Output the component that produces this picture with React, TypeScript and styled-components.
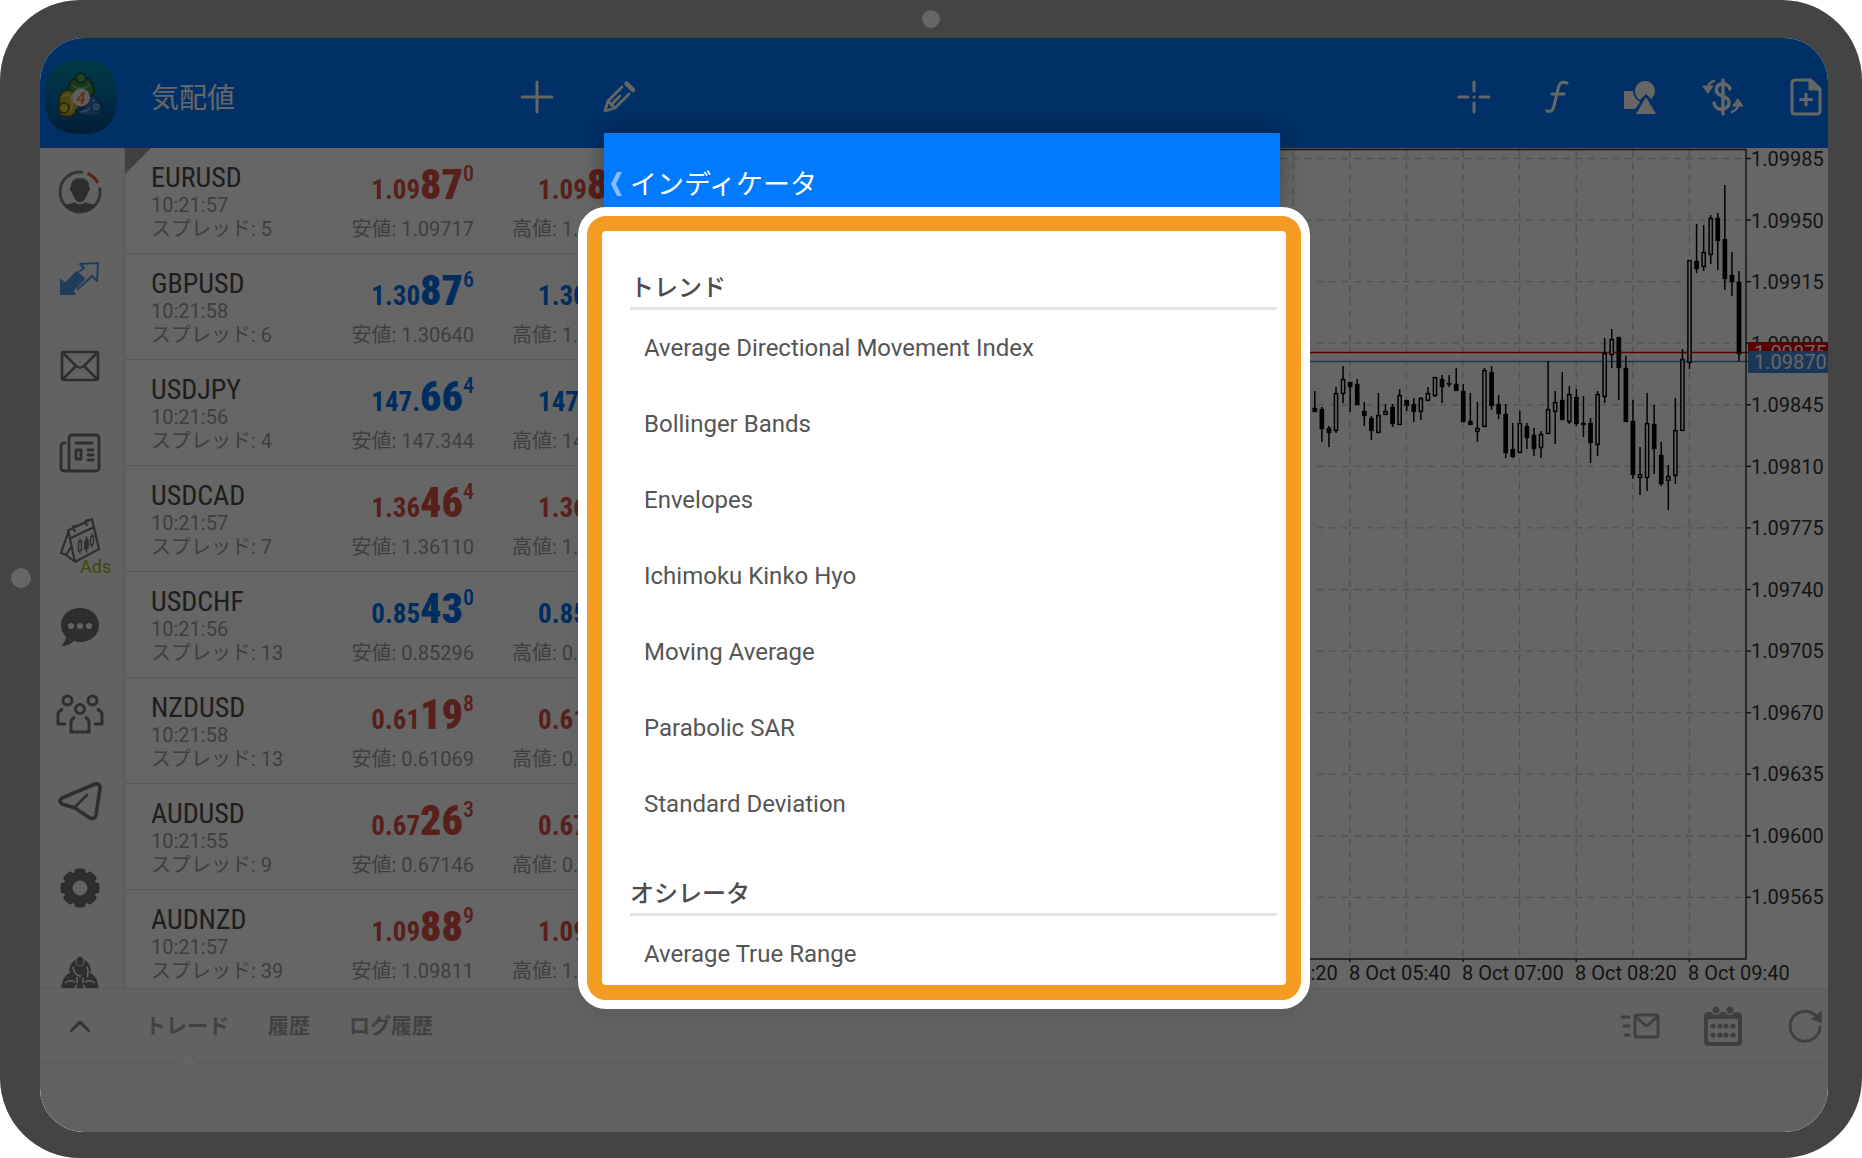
import React from "react";
import styled, { createGlobalStyle } from "styled-components";

const SANS = `Roboto, "Noto Sans CJK JP", sans-serif`;
const NARROW = `"Roboto Condensed", "Liberation Sans Narrow", Roboto, sans-serif`;

const GlobalStyle = createGlobalStyle`
  *, *::before, *::after { box-sizing: border-box; }
  body { margin: 0; background: #fff; font-family: ${SANS}; }
  button { border: 0; padding: 0; background: none; font: inherit; color: inherit; cursor: pointer; }
  svg { display: block; flex: none; }
  h1, h2, p, ul { margin: 0; padding: 0; }
`;

/* ---------- device ---------- */

const Tablet = styled.div`
  position: relative;
  height: 100vh;
  padding: 38px 34px 26px 40px;
  border-radius: 80px;
  background: #444;
`;

const Camera = styled.span<{ $side?: boolean }>`
  position: absolute;
  width: ${(p) => (p.$side ? 20 : 18)}px;
  height: ${(p) => (p.$side ? 20 : 18)}px;
  border-radius: 50%;
  background: #666;
  top: ${(p) => (p.$side ? "calc(50% - 11px)" : "10px")};
  left: ${(p) => (p.$side ? "11px" : "calc(50% - 9px)")};
`;

const Screen = styled.div`
  position: relative;
  display: flex;
  flex-direction: column;
  height: 100%;
  border-radius: 44px;
  overflow: hidden;
  background: #fff;
`;

/* ---------- top bar ---------- */

const TopBar = styled.header`
  display: flex;
  align-items: center;
  flex: none;
  height: 110px;
  padding-top: 8px;
  background: #0079ff;
  color: #fff;
`;

const AppLogo = styled.div`
  padding-left: 4px;
  width: 111px;
`;

const PageTitle = styled.h1`
  width: 344px;
  padding-top: 4px;
  font-size: 28px;
  line-height: 36px;
  font-weight: 400;
`;

const ToolButton = styled.button`
  display: flex;
  align-items: center;
  justify-content: center;
  width: 83px;
  height: 60px;
`;

const Tools = styled.div<{ $end?: boolean }>`
  display: flex;
  margin-left: ${(p) => (p.$end ? "auto" : "0")};
  margin-right: ${(p) => (p.$end ? "-19px" : "0")};
`;

/* ---------- main area ---------- */

const Main = styled.main`
  display: flex;
  flex: 1;
  min-height: 0;
  overflow: hidden;
`;

const SideNav = styled.nav`
  flex: none;
  width: 85px;
  overflow: hidden;
  background: #f5f5f5;
  border-right: 1px solid #dcdcdc;
  color: #747474;
`;

const SideButton = styled.button`
  position: relative;
  display: flex;
  align-items: center;
  justify-content: center;
  width: 80px;
  height: 87px;
`;

const AdsTag = styled.span`
  position: absolute;
  left: 40px;
  bottom: 6px;
  font-size: 18px;
  line-height: 20px;
  color: #98b800;
`;

const Quotes = styled.ul`
  flex: none;
  width: 540px;
  overflow: hidden;
  list-style: none;
  background: #fff;
`;

const QuoteRow = styled.li<{ $marked?: boolean }>`
  display: grid;
  grid-template-columns: 172px 151px auto;
  height: 106px;
  padding: 15px 0 0 26px;
  border-bottom: 1px solid #dcdcdc;
  background: ${(p) =>
    p.$marked
      ? "linear-gradient(135deg, #a4a4a4 18px, transparent 19px) no-repeat #fff"
      : "#fff"};
`;

const Symbol = styled.p`
  font-family: ${NARROW};
  font-size: 28px;
  line-height: 30px;
  color: #4d4d4d;
`;

const Meta = styled.p`
  font-size: 20px;
  line-height: 24px;
  color: #9c9c9c;
  white-space: nowrap;
`;

const QuoteInfo = styled.div`
  white-space: nowrap;
`;

const PriceCell = styled.div<{ $ask?: boolean }>`
  display: flex;
  flex-direction: column;
  align-items: ${(p) => (p.$ask ? "flex-start" : "flex-end")};
  padding-left: ${(p) => (p.$ask ? "38px" : "0")};
`;

const Price = styled.p<{ $up: boolean; $ask?: boolean }>`
  display: flex;
  align-items: baseline;
  height: 54px;
  padding-left: ${(p) => (p.$ask ? "26px" : "0")};
  font-family: ${NARROW};
  font-weight: 700;
  font-size: 27px;
  line-height: 44px;
  color: ${(p) => (p.$up ? "#0072ef" : "#dc5144")};

  /* keeps the baseline of rows without large digits */
  &::before {
    content: "\\200b";
    font-size: 42px;
  }
`;

const Pips = styled.b`
  font-size: 42px;
`;

const Point = styled.sup`
  align-self: flex-start;
  font-size: 22px;
  line-height: 22px;
  font-weight: 500;
`;

/* ---------- chart ---------- */

const ChartPane = styled.section`
  display: flex;
  flex: 1;
  min-width: 0;
  background: #fff;
`;

const PlotColumn = styled.div`
  display: flex;
  flex-direction: column;
  flex: 1;
  min-width: 0;
`;

const Plot = styled.div`
  display: flex;
  justify-content: flex-end;
  height: 815px;
  overflow: hidden;
`;

const TimeScale = styled.div`
  display: flex;
  justify-content: flex-end;
  margin-right: -50px;
  font-size: 20px;
  line-height: 20px;
  color: #333;
`;

const TimeLabel = styled.span`
  width: 113px;
  white-space: nowrap;
`;

const PriceScale = styled.div`
  position: relative;
  display: flex;
  flex-direction: column;
  justify-content: space-between;
  flex: none;
  width: 77px;
  padding: 1px 0 81px 0;
  font-size: 20px;
  line-height: 20px;
  color: #333;
`;

const PriceTag = styled.span<{ $bid?: boolean }>`
  position: absolute;
  left: -3px;
  right: 0;
  top: ${(p) => (p.$bid ? 203 : 194)}px;
  padding-left: 6px;
  line-height: 22px;
  overflow: hidden;
  color: #fff;
  background: ${(p) => (p.$bid ? "#4489dc" : "#e00000")};
`;

/* ---------- bottom toolbox ---------- */

const BottomBar = styled.footer`
  display: flex;
  align-items: center;
  flex: none;
  height: 75px;
  border-top: 1px solid #e2e2e2;
  border-bottom: 1px solid #e2e2e2;
  background: #f6f6f6;
  color: #9e9e9e;
`;

const ExpandButton = styled.button`
  display: flex;
  justify-content: center;
  width: 80px;
  color: #808080;
`;

const TabButton = styled.button<{ $active?: boolean }>`
  position: relative;
  height: 73px;
  margin-left: 25px;
  margin-right: 14px;
  padding-bottom: 3px;
  font-size: 21px;
  font-weight: 700;
  color: #a4a4a4;

  & > svg {
    position: absolute;
    left: calc(50% - 12px);
    bottom: -1px;
  }
`;

const BottomPanel = styled.div`
  flex: none;
  height: 69px;
  background: #f3f3f3;
`;

/* ---------- dialog ---------- */

const Backdrop = styled.div`
  position: absolute;
  inset: 0;
  display: flex;
  flex-direction: column;
  align-items: center;
  padding: 95px 0 0 20px;
  background: rgba(0, 0, 0, 0.6);
`;

const Dialog = styled.section`
  width: 732px;
`;

const DialogHeader = styled.header`
  display: flex;
  align-items: flex-end;
  height: 74px;
  margin: 0 30px 0 26px;
  padding: 0 0 4px 6px;
  background: #007aff;
  color: #fff;
  box-shadow: 0 0 24px rgba(0, 0, 0, 0.35);
`;

const BackButton = styled.button`
  display: flex;
  align-items: center;
  height: 38px;
  width: 20px;
`;

const DialogTitle = styled.h2`
  font-size: 27px;
  line-height: 36px;
  font-weight: 400;
`;

const Halo = styled.div`
  position: relative;
  height: 802px;
  border: 9px solid #fff;
  border-radius: 28px;
  background: #fff;
  box-shadow: 0 12px 16px rgba(0, 0, 0, 0.06);
`;

const Highlight = styled.div`
  height: 100%;
  border: 15px solid #f59b22;
  border-radius: 19px;
  padding: 5px 9px 0 28px;
  overflow: hidden;
  background: #fff;
`;

const GroupTitle = styled.h2`
  padding: 37px 0 4px 0;
  border-bottom: 3px solid #e3e3e3;
  font-size: 24px;
  line-height: 30px;
  font-weight: 500;
  color: #4c4c4c;
`;

const IndicatorList = styled.ul`
  list-style: none;
`;

const IndicatorButton = styled.button`
  display: block;
  width: 100%;
  height: 76px;
  padding-left: 14px;
  text-align: left;
  font-size: 24px;
  line-height: 30px;
  color: #555;
`;

/* ---------- icons ---------- */

const line = {
  fill: "none",
  stroke: "currentColor",
  strokeLinecap: "round" as const,
  strokeLinejoin: "round" as const,
};

const LogoIcon = () => (
  <svg width="74" height="76" viewBox="0 0 74 76">
    <defs>
      <linearGradient id="tile" x1="0" y1="0" x2="0" y2="1">
        <stop offset="0" stopColor="#008ea6" />
        <stop offset="0.5" stopColor="#0074b0" />
        <stop offset="1" stopColor="#004a86" />
      </linearGradient>
    </defs>
    <path d="M37 1C62 1 73 12 73 38S62 75 37 75 1 64 1 38 12 1 37 1z" fill="url(#tile)" />
    <g strokeLinejoin="round">
      <g stroke="#1c4a30" strokeWidth="1.600">
        <path d="M24 34c-1-7 2-13 8-15h10c6 2 9 9 8 16l-6 3-14-2z" fill="#3f8f4a" />
        <path d="M28 26q9 7 18 0" fill="none" stroke="#7cc06a" />
        <circle cx="37" cy="19" r="4.800" fill="#56a65a" />
      </g>
      <g stroke="#5a5a10" strokeWidth="1.600">
        <path d="M16 47c-2-8 0-14 7-16 6 0 9 3 9 9 3 4 3 9 0 12-2 5-6 6-11 5-5 0-7-4-5-10z" fill="#b9ad2c" />
        <path d="M19 37q8-4 9 5t-4 11" fill="none" stroke="#e6dc78" />
        <circle cx="20" cy="49" r="5" fill="#d2c63c" />
      </g>
      <g stroke="#1b4f86" strokeWidth="1.600">
        <path d="M32 51c8 0 13-6 14-15 7 2 13 8 12 15-1 5-6 6-10 5-6 1-13 0-16-5z" fill="#2f7cba" />
        <path d="M37 53q11-1 13-12" fill="none" stroke="#7ab8e6" />
        <circle cx="52" cy="48" r="4.800" fill="#5fa6dc" />
      </g>
    </g>
    <circle cx="37" cy="38.500" r="9" fill="#eaeaf0" />
    <text x="37" y="45" textAnchor="middle" fontFamily="Roboto, sans-serif" fontWeight="700" fontStyle="italic" fontSize="17" fill="#f0852c">4</text>
  </svg>
);

const PlusIcon = () => (
  <svg width="34" height="34" viewBox="0 0 34 34" {...line} strokeWidth="3"><path d="M17 2v30M2 17h30" /></svg>
);
const PencilIcon = () => (
  <svg width="34" height="34" viewBox="0 0 34 34" {...line} strokeWidth="2.800">
    <path d="M19 7 5 21 2 31l10-3 14-14M5 21l7 7M17 16 8 25" />
    <path d="M23.500 3.500 30 10" strokeWidth="4.500" />
  </svg>
);
const CrosshairIcon = () => (
  <svg width="34" height="34" viewBox="0 0 34 34" {...line} strokeWidth="3">
    <path d="M17 2v9M17 23v9M2 17h9M23 17h9M17 17h.1" />
  </svg>
);
const FunctionIcon = () => (
  <svg width="34" height="36" viewBox="0 0 34 36" {...line} strokeWidth="3.200">
    <path d="M27 4c-5-2-8 0-9 6l-4 17c-1 5-4 6-7 5M12 15h12" />
  </svg>
);
const ShapesIcon = () => (
  <svg width="34" height="36" viewBox="0 0 34 36" fill="currentColor">
    <path d="M1 13q0-1 1-1h8q1 8 7 11l-4 6q-1 1-3 1H2q-1 0-1-1z" />
    <path d="M12 12a10 10 0 1 1 16 8L23 15l-6 6q-5-3-5-9z" />
    <path d="M23 18 33 35H13z" />
  </svg>
);
const DollarIcon = () => (
  <svg width="42" height="38" viewBox="0 0 42 38" {...line} strokeWidth="3.400">
    <path d="M28 11c-1-4-5-6-9-5-5 1-7 8-1 11l5 2c6 3 5 10-1 12-5 1-9-1-10-6M21 2v34" />
    <path d="M12 3C8 4 6 7 6 11M30 34c3-1 6-4 6-7" strokeWidth="2.400" />
    <path d="M1 8h10l-5 7zM31 28h10l-5-7z" fill="currentColor" strokeWidth="1" />
  </svg>
);
const NewDocIcon = () => (
  <svg width="32" height="38" viewBox="0 0 32 38" {...line} strokeWidth="3">
    <path d="M6 2h15l9 9v22q0 3-3 3H5q-3 0-3-3V5q0-3 4-3z" />
    <path d="M20 3v8h9z" fill="currentColor" />
    <path d="M16 16v11M10.500 21.500h11" />
  </svg>
);
const AccountIcon = () => (
  <svg width="44" height="44" viewBox="0 0 44 44" fill="none">
    <path d="M41.500 17.500A20 20 0 1 1 25 2.200" stroke="#848484" strokeWidth="3" />
    <path d="M29.500 3.500A20 20 0 0 1 40 13" stroke="#e05548" strokeWidth="3" />
    <path d="M22 8c6 0 9 3 9 8 2 3 1 5-1 6-1 5-4 10-8 10s-7-5-8-10c-2-1-3-3-1-6 0-5 3-8 9-8z" fill="#747474" />
    <path d="M6 34c5 0 8 0 10-2 4 3 8 3 12 0 2 2 5 2 10 2-8 11-24 11-32 0z" fill="#747474" />
  </svg>
);
const TradeIcon = () => (
  <svg width="40" height="36" viewBox="0 0 40 36" {...line} stroke="#4c96e6" strokeWidth="2">
    <path d="M1 33V19l4 4L17 11l7 7-12 12 3 3z" fill="#4c96e6" />
    <path d="M20 10l4-3-4-4 18-1-1 18-5-5-14 13" />
  </svg>
);
const MailIcon = () => (
  <svg width="40" height="32" viewBox="0 0 40 32" {...line} strokeWidth="2.600">
    <rect x="2" y="2" width="36" height="28" rx="1.500" />
    <path d="M3 3l13 13q4 3 8 0L37 3M3 29l12-12M37 29 25 17" />
  </svg>
);
const NewsIcon = () => (
  <svg width="42" height="40" viewBox="0 0 42 40" {...line} strokeWidth="2.800">
    <rect x="10" y="2" width="30" height="36" rx="3" />
    <path d="M6 10q-4 0-4 3v22q0 3 4 3h8M17 10h16M29 17h5M29 22h5M29 27h5" />
    <rect x="17" y="17" width="5" height="9" />
  </svg>
);
const CalendarAdsIcon = () => (
  <svg width="42" height="46" viewBox="0 0 42 46" {...line} strokeWidth="2.200">
    <path d="M10 13 33 2l7 30-24 13-7-32zM10 13 2 36l5 2 9 7M7 38l5-8M12 21l23-11M16 14c-3-2-3-5 0-5M28 8c-3-2-2-5 1-5" />
    <path d="M21 22v14M33 17v13" strokeWidth="1.400" />
    <path d="M19.500 25l3-1v9l-3 1zM31.500 20l3-1v8l-3 1z" strokeWidth="1.400" fill="#f5f5f5" />
    <path d="M26 24l3-1v8l-3 1zM27.500 20v15" fill="currentColor" strokeWidth="1.600" />
  </svg>
);
const ChatIcon = () => (
  <svg width="40" height="40" viewBox="0 0 40 40">
    <path d="M20 1c11 0 19 7 19 17s-8 17-19 17c-2 0-4 0-6-1-3 3-8 5-13 5 3-3 5-6 5-9-3-3-5-7-5-12C1 8 9 1 20 1z" fill="currentColor" />
    <g fill="#f5f5f5"><circle cx="11" cy="19" r="3" /><circle cx="20" cy="19" r="3" /><circle cx="29" cy="19" r="3" /></g>
  </svg>
);
const PeopleIcon = () => (
  <svg width="48" height="40" viewBox="0 0 48 40" fill="none" stroke="currentColor" strokeWidth="3">
    <circle cx="11.500" cy="6.500" r="4.500" /><circle cx="36.500" cy="6.500" r="4.500" /><circle cx="24" cy="15" r="4.500" />
    <path d="M7 15q-5 2-5 6v9h8M41 15q5 2 5 6v9h-8M19 23q-4 2-4 6v9h18v-9q0-4-4-6" />
  </svg>
);
const PlaneIcon = () => (
  <svg width="44" height="40" viewBox="0 0 44 40" {...line} strokeWidth="3.600">
    <path d="M4 17 37 3q5-1 5 4l-4 27q-1 5-6 3L17 27 4 23q-4-3 0-6z" />
    <path d="M17 26 29 14" strokeWidth="2.600" />
  </svg>
);
const GearIcon = () => (
  <svg width="40" height="40" viewBox="0 0 40 40" fill="none" stroke="currentColor">
    <circle cx="20" cy="20" r="12" strokeWidth="9" />
    {Array.from({ length: 8 }, (_, i) => (
      <path key={i} d="M17.500 3.500h5" strokeWidth="6" strokeLinecap="round" transform={`rotate(${i * 45} 20 20)`} />
    ))}
  </svg>
);
const CommunityIcon = () => (
  <svg width="40" height="40" viewBox="0 0 40 40" fill="currentColor">
    <path d="M9 16C10 8 14 4 20 4s10 4 11 12q-4 4-11 4T9 16z" />
    <path d="M1 38c0-12 4-20 12-21 5 0 7 4 7 8 0-4 2-8 7-8 8 1 12 9 12 21z" />
    <ellipse cx="20" cy="6" rx="4" ry="5" stroke="#f5f5f5" strokeWidth="1" />
    <path d="M13 12q1 8 7 9M27 12q2 5 0 10M5 28q4-4 10-1M25 27q6-3 10 1M14 40q0-8 3-10M26 40q0-8-3-10M4 34h7M29 34h7M17 22v6M23 23v5" fill="none" stroke="#f5f5f5" strokeWidth="1.600" />
  </svg>
);
const ChevronUpIcon = () => (
  <svg width="22" height="14" viewBox="0 0 22 14" {...line} strokeWidth="3"><path d="M2.500 11.500 11 3l8.500 8.500" /></svg>
);
const BackIcon = () => (
  <svg width="12" height="24" viewBox="0 0 12 24" fill="#84beff"><path d="M7 0h5L6 12l6 12H7L1 12z" /></svg>
);
const NotchIcon = () => (
  <svg width="24" height="10" viewBox="0 0 24 10" fill="#f9f9f9" stroke="#e2e2e2"><path d="M0 10 8 3q4-4 8 0l8 7" /></svg>
);
const SendMailIcon = () => (
  <svg width="40" height="26" viewBox="0 0 40 26" {...line} strokeWidth="3">
    <rect x="15" y="2" width="23" height="22" rx="1.500" /><path d="M16 4l9 8q2 1 3 0l9-8M2 4h7M4 13h5M5 22h4" />
  </svg>
);
const CalendarIcon = () => (
  <svg width="38" height="40" viewBox="0 0 38 40" fill="currentColor">
    <path fillRule="evenodd" d="M3 6h32q3 1 3 4v26q0 4-4 4H4q-4 0-4-4V10q0-3 3-4zm2 7q-1 0-1 2v18q0 3 2 3h26q2 0 2-3V15q0-2-1-2z" />
    <circle cx="12" cy="4" r="5" fill="#f6f6f6" /><circle cx="26" cy="4" r="5" fill="#f6f6f6" />
    <circle cx="12" cy="4" r="3.500" /><circle cx="26" cy="4" r="3.500" />
    {[20, 29].map((y) => [9, 16, 22, 29].map((x) => <circle key={`${x}-${y}`} cx={x} cy={y} r="2.600" />))}
  </svg>
);
const RefreshIcon = () => (
  <svg width="34" height="36" viewBox="0 0 34 36" {...line} strokeWidth="3">
    <path d="M31 19A15 15 0 1 1 26 7" /><path d="M23 11l9-7v10z" fill="currentColor" strokeWidth="1.500" />
  </svg>
);

/* ---------- data ---------- */

type Quote = {
  symbol: string; time: string; spread: number; up: boolean;
  bid: [string, string, string]; ask: [string, string?]; low: string; high: string;
};

const quotes: Quote[] = [
  { symbol: "EURUSD", time: "10:21:57", spread: 5, up: false, bid: ["1.09", "87", "0"], ask: ["1.09", "8"], low: "1.09717", high: "1." },
  { symbol: "GBPUSD", time: "10:21:58", spread: 6, up: true, bid: ["1.30", "87", "6"], ask: ["1.30"], low: "1.30640", high: "1." },
  { symbol: "USDJPY", time: "10:21:56", spread: 4, up: true, bid: ["147.", "66", "4"], ask: ["147"], low: "147.344", high: "14" },
  { symbol: "USDCAD", time: "10:21:57", spread: 7, up: false, bid: ["1.36", "46", "4"], ask: ["1.36"], low: "1.36110", high: "1." },
  { symbol: "USDCHF", time: "10:21:56", spread: 13, up: true, bid: ["0.85", "43", "0"], ask: ["0.85"], low: "0.85296", high: "0." },
  { symbol: "NZDUSD", time: "10:21:58", spread: 13, up: false, bid: ["0.61", "19", "8"], ask: ["0.61"], low: "0.61069", high: "0." },
  { symbol: "AUDUSD", time: "10:21:55", spread: 9, up: false, bid: ["0.67", "26", "3"], ask: ["0.67"], low: "0.67146", high: "0." },
  { symbol: "AUDNZD", time: "10:21:57", spread: 39, up: false, bid: ["1.09", "88", "9"], ask: ["1.09"], low: "1.09811", high: "1." },
];

/* high, body top, body bottom, low, 1 = rising (hollow) */
const candles: number[][] = [
  [243,260,264,264,0],[259,261,281,294,0],[278,280,285,299,0],[239,245,283,285,1],[218,231,246,255,1],
  [234,234,239,264,0],[231,236,257,257,0],[254,263,268,278,0],[268,270,283,292,0],[245,267,285,285,1],
  [256,263,267,267,1],[256,259,276,279,0],[241,247,277,277,1],[252,252,258,263,0],[250,256,264,274,0],
  [249,250,264,272,1],[239,245,253,253,1],[229,229,248,249,1],[227,231,239,255,0],[227,235,236,239,0],
  [220,236,243,243,0],[236,243,274,274,0],[245,273,277,277,0],[254,280,284,294,1],[220,222,279,279,1],
  [218,224,258,262,0],[247,256,266,271,0],[256,266,305,310,0],[275,301,309,310,0],[263,275,305,305,1],
  [275,278,290,301,0],[280,287,301,308,0],[283,286,300,310,1],[213,261,286,286,1],[243,254,264,296,1],
  [224,252,272,272,0],[238,246,274,276,1],[241,249,276,278,0],[248,275,277,289,0],[270,275,295,315,0],
  [243,246,297,308,1],[190,205,249,255,1],[181,191,207,220,1],[189,189,220,252,0],[208,220,274,274,0],
  [252,273,327,331,0],[299,326,330,347,1],[245,275,330,343,1],[257,276,301,326,0],[294,307,336,338,0],
  [317,328,333,362,1],[250,282,328,336,1],[201,211,283,283,1],[112,112,215,221,1],[76,113,121,125,0],
  [77,104,119,123,1],[67,70,107,116,1],[65,70,93,122,0],[37,91,131,142,0],[104,127,134,148,0],
  [123,134,206,213,0],
];

const priceLabels = Array.from({ length: 13 }, (_, i) => (1.09985 - i * 0.00035).toFixed(5));
const timeLabels = ["8 Oct 04:20", "8 Oct 05:40", "8 Oct 07:00", "8 Oct 08:20", "8 Oct 09:40"];

const AXIS = 1081;
const STEP = 56.6;
const PRICE_STEP = 61.57;

const Chart = () => (
  <svg width="1086" height="815" viewBox="0 0 1086 815">
    <g stroke="#cbcbcb" strokeWidth="1.300" strokeDasharray="7 5.300">
      {Array.from({ length: 19 }, (_, i) => (
        <path key={i} d={`M${AXIS - STEP * (i + 1)} 2V811`} />
      ))}
      {priceLabels.map((p, i) => <path key={p} d={`M0 ${10.5 + PRICE_STEP * i}H${AXIS}`} />)}
    </g>
    <path d="M0 204.500H1086" stroke="#e00000" strokeWidth="1.500" />
    <path d="M0 213.500H1086" stroke="#4489dc" strokeWidth="1.500" />
    {candles.map(([high, top, bottom, low, rising], i) => {
      const x = 1074 - (candles.length - 1 - i) * 7.07;
      return (
        <g key={i} stroke="#000" strokeWidth="1.500">
          <path d={`M${x} ${high}V${low}`} />
          <rect x={x - 1.6} y={top + 0.6} width="3.200" height={Math.max(bottom - top - 1.2, 0.4)} fill={rising ? "#fff" : "#000"} />
        </g>
      );
    })}
    <g stroke="#333" strokeWidth="1.500" fill="none">
      <path d={`M0 1.500H${AXIS}V811H0`} />
      {priceLabels.map((p, i) => <path key={p} d={`M${AXIS} ${10.5 + PRICE_STEP * i}h5`} />)}
      {[1, 3, 5, 7, 9].map((k) => <path key={k} d={`M${AXIS - STEP * k} 811v3`} />)}
    </g>
  </svg>
);

const sideItems: [string, React.FC][] = [
  ["アカウント", AccountIcon], ["トレード", TradeIcon], ["メール", MailIcon], ["ニュース", NewsIcon],
  ["経済指標カレンダー", CalendarAdsIcon], ["チャット", ChatIcon], ["コミュニティ", PeopleIcon],
  ["Telegram", PlaneIcon], ["設定", GearIcon], ["MQL5", CommunityIcon],
];

const chartTools: [string, React.FC][] = [
  ["クロスヘア", CrosshairIcon], ["インディケータ", FunctionIcon], ["オブジェクト", ShapesIcon],
  ["通貨", DollarIcon], ["新規注文", NewDocIcon],
];

const bottomTools: [string, React.FC][] = [
  ["メール送信", SendMailIcon], ["カレンダー", CalendarIcon], ["更新", RefreshIcon],
];

const groups = [
  {
    title: "トレンド",
    items: ["Average Directional Movement Index", "Bollinger Bands", "Envelopes", "Ichimoku Kinko Hyo", "Moving Average", "Parabolic SAR", "Standard Deviation"],
  },
  { title: "オシレータ", items: ["Average True Range"] },
];

export default function App() {
  return (
    <>
      <GlobalStyle />
      <Tablet>
        <Camera />
        <Camera $side />
        <Screen>
          <TopBar>
            <AppLogo><LogoIcon /></AppLogo>
            <PageTitle>気配値</PageTitle>
            <Tools>
              <ToolButton aria-label="追加"><PlusIcon /></ToolButton>
              <ToolButton aria-label="編集"><PencilIcon /></ToolButton>
            </Tools>
            <Tools $end>
              {chartTools.map(([name, Icon]) => (
                <ToolButton key={name} aria-label={name}><Icon /></ToolButton>
              ))}
            </Tools>
          </TopBar>

          <Main>
            <SideNav>
              {sideItems.map(([name, Icon]) => (
                <SideButton key={name} aria-label={name}>
                  <Icon />
                  {Icon === CalendarAdsIcon && <AdsTag>Ads</AdsTag>}
                </SideButton>
              ))}
            </SideNav>

            <Quotes>
              {quotes.map((q, i) => (
                <QuoteRow key={q.symbol} $marked={i === 0}>
                  <QuoteInfo>
                    <Symbol>{q.symbol}</Symbol>
                    <Meta>{q.time}</Meta>
                    <Meta>スプレッド: {q.spread}</Meta>
                  </QuoteInfo>
                  <PriceCell>
                    <Price $up={q.up}>
                      {q.bid[0]}<Pips>{q.bid[1]}</Pips><Point>{q.bid[2]}</Point>
                    </Price>
                    <Meta>安値: {q.low}</Meta>
                  </PriceCell>
                  <PriceCell $ask>
                    <Price $up={q.up} $ask>
                      {q.ask[0]}{q.ask[1] && <Pips>{q.ask[1]}</Pips>}
                    </Price>
                    <Meta>高値: {q.high}</Meta>
                  </PriceCell>
                </QuoteRow>
              ))}
            </Quotes>

            <ChartPane>
              <PlotColumn>
                <Plot><Chart /></Plot>
                <TimeScale>
                  {timeLabels.map((t) => <TimeLabel key={t}>{t}</TimeLabel>)}
                </TimeScale>
              </PlotColumn>
              <PriceScale>
                {priceLabels.map((p) => <span key={p}>{p}</span>)}
                <PriceTag>1.09875</PriceTag>
                <PriceTag $bid>1.09870</PriceTag>
              </PriceScale>
            </ChartPane>
          </Main>

          <BottomBar>
            <ExpandButton aria-label="開く"><ChevronUpIcon /></ExpandButton>
            <TabButton $active>トレード<NotchIcon /></TabButton>
            <TabButton>履歴</TabButton>
            <TabButton>ログ履歴</TabButton>
            <Tools $end>
              {bottomTools.map(([name, Icon]) => (
                <ToolButton key={name} aria-label={name}><Icon /></ToolButton>
              ))}
            </Tools>
          </BottomBar>
          <BottomPanel />

          <Backdrop>
            <Dialog role="dialog" aria-label="インディケータ">
              <DialogHeader>
                <BackButton aria-label="戻る"><BackIcon /></BackButton>
                <DialogTitle>インディケータ</DialogTitle>
              </DialogHeader>
              <Halo>
                <Highlight>
                  {groups.map((g) => (
                    <React.Fragment key={g.title}>
                      <GroupTitle>{g.title}</GroupTitle>
                      <IndicatorList>
                        {g.items.map((name) => (
                          <li key={name}><IndicatorButton>{name}</IndicatorButton></li>
                        ))}
                      </IndicatorList>
                    </React.Fragment>
                  ))}
                </Highlight>
              </Halo>
            </Dialog>
          </Backdrop>
        </Screen>
      </Tablet>
    </>
  );
}
